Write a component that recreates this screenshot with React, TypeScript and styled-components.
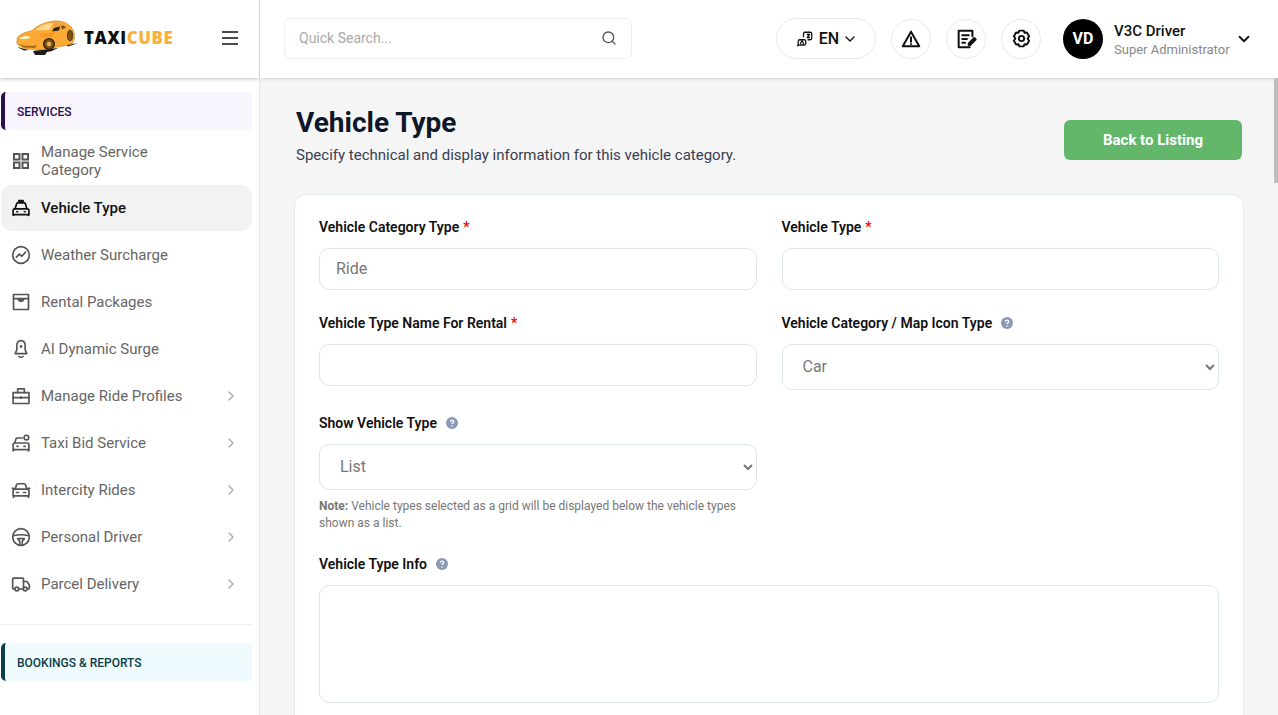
import React from 'react';
import styled, { createGlobalStyle } from 'styled-components';
import { ChevronDown, ChevronRight, Search } from 'lucide-react';

const GlobalStyle = createGlobalStyle`
  html, body {
    margin: 0;
    height: 100%;
    overflow: hidden;
    font-family: Roboto, "Liberation Sans", sans-serif;
  }
  * { box-sizing: border-box; }
`;

const Shell = styled.div`
  display: flex;
  width: 100vw;
  height: 100vh;
  background: #f5f5f5;
`;

const Sidebar = styled.aside`
  flex: 0 0 260px;
  display: flex;
  flex-direction: column;
  background: #fff;
  border-right: 1px solid #e4e4e4;
  overflow: hidden;
`;

const Brand = styled.div`
  flex: 0 0 78px;
  display: flex;
  align-items: center;
  justify-content: space-between;
  padding: 0 21px 2px 16px;
  box-shadow: 0 1px 4px rgba(0, 0, 0, 0.25);
`;

const LogoWrap = styled.div`
  display: flex;
  align-items: center;
  gap: 6px;
`;

const LogoText = styled.span`
  font-family: "Open Sans", sans-serif;
  font-weight: 800;
  font-size: 16.8px;
  letter-spacing: 0.65px;
  color: #111;
  line-height: 1;
`;

const LogoAccent = styled.span`
  color: #fbb03b;
`;

const MenuButton = styled.button`
  display: flex;
  padding: 0;
  border: 0;
  background: none;
  color: #111;
`;

const Nav = styled.nav`
  display: flex;
  flex-direction: column;
  padding: 14px 7px 0 1px;
`;

const SectionHead = styled.div<{ $bg: string; $accent: string; $color: string }>`
  height: 38px;
  display: flex;
  align-items: center;
  padding: 1px 0 0 12px;
  font-size: 12px;
  font-weight: 500;
  color: ${p => p.$color};
  background: ${p => p.$bg};
  border-left: 4px solid ${p => p.$accent};
  border-radius: 5px 0 0 5px;
`;

const NavList = styled.ul`
  list-style: none;
  margin: 8px 0 0;
  padding: 0;
  display: flex;
  flex-direction: column;
  gap: 1px;
`;

const NavItem = styled.li<{ $active?: boolean }>`
  height: 46px;
  display: flex;
  align-items: center;
  padding: 0 13px 0 10px;
  gap: 10px;
  border-radius: 10px;
  font-size: 15px;
  line-height: 18px;
  font-weight: ${p => (p.$active ? 500 : 400)};
  color: ${p => (p.$active ? '#111' : '#666')};
  background: ${p => (p.$active ? '#f2f2f2' : 'transparent')};
`;

const NavIcon = styled.span<{ $active?: boolean }>`
  flex: 0 0 20px;
  min-width: 0;
  display: flex;
  justify-content: center;
  color: ${p => (p.$active ? '#111' : '#555')};
`;

const NavLabel = styled.span`
  flex: 1;
  max-width: 150px;
`;

const NavChevron = styled(ChevronRight)`
  margin-left: auto;
  color: #aaa;
`;

const NavDivider = styled.hr`
  border: 0;
  border-top: 1px solid #eee;
  margin: 17px 0 18px -1px;
  width: 252px;
`;

const Column = styled.div`
  flex: 1;
  min-width: 0;
  display: flex;
  flex-direction: column;
  position: relative;
`;

const TopBar = styled.header`
  flex: 0 0 78px;
  display: flex;
  align-items: center;
  padding: 0 25px 1px 24px;
  background: #fff;
  box-shadow: 0 1px 3px rgba(0, 0, 0, 0.15);
  position: relative;
`;

const SearchBox = styled.div`
  width: 348px;
  height: 41px;
  display: flex;
  align-items: center;
  justify-content: space-between;
  padding: 0 14px 2px;
  border: 1px solid #eee;
  border-radius: 6px;
  color: #555;
`;

const SearchInput = styled.input`
  flex: 1;
  border: 0;
  outline: 0;
  padding: 0;
  font: 400 14px Roboto, sans-serif;
  &::placeholder { color: #aaa; opacity: 1; }
`;

const TopActions = styled.div`
  margin-left: auto;
  display: flex;
  align-items: center;
  gap: 15px;
`;

const LangButton = styled.div`
  width: 100px;
  height: 41px;
  display: flex;
  align-items: center;
  justify-content: center;
  gap: 5px;
  padding-left: 2px;
  border: 1px solid #e8e8e8;
  border-radius: 21px;
  font-size: 16px;
  font-weight: 500;
  color: #111;
`;

const LangChevron = styled(ChevronDown)`
  margin-left: -2px;
`;

const RoundButton = styled.div`
  width: 40px;
  height: 40px;
  display: flex;
  align-items: center;
  justify-content: center;
  border: 1px solid #eaeaea;
  border-radius: 50%;
  color: #111;
`;

const Profile = styled.div`
  display: flex;
  align-items: center;
  margin-left: 7px;
`;

const Avatar = styled.div`
  width: 40px;
  height: 40px;
  display: flex;
  align-items: center;
  justify-content: center;
  border-radius: 50%;
  background: #000;
  color: #fff;
  font-size: 16px;
  font-weight: 700;
`;

const ProfileText = styled.div`
  width: 121px;
  display: flex;
  flex-direction: column;
  gap: 2px;
  margin: 2px 0 0 11px;
`;

const ProfileName = styled.span`
  font-size: 15px;
  font-weight: 500;
  line-height: 18px;
  color: #111;
`;

const ProfileRole = styled.span`
  font-size: 13px;
  line-height: 16px;
  color: #888;
`;

const Main = styled.main`
  flex: 1;
  overflow: hidden;
  padding: 27px 34px 0 34px;
`;

const ScrollThumb = styled.div`
  position: absolute;
  top: 78px;
  right: 0;
  width: 4px;
  height: 105px;
  background: #bdbdbd;
`;

const PageHead = styled.div`
  display: flex;
  align-items: flex-start;
  justify-content: space-between;
  padding: 0 2px;
  margin-bottom: 29px;
`;

const PageTitle = styled.h1`
  margin: 0;
  font-size: 28px;
  font-weight: 700;
  line-height: 36px;
  color: #0f172a;
`;

const PageSub = styled.p`
  margin: 4px 0 0;
  font-size: 15px;
  line-height: 20px;
  color: #374151;
`;

const BackButton = styled.button`
  width: 178px;
  height: 40px;
  margin-top: 15px;
  border: 0;
  border-radius: 6px;
  background: #62b76b;
  color: #fff;
  font: 700 15px Roboto, sans-serif;
`;

const Card = styled.section`
  min-height: 3600px;
  padding: 22px 24px;
  background: #fff;
  border: 1px solid #e5e9f0;
  border-radius: 12px 12px 0 0;
`;

const FormGrid = styled.div`
  display: grid;
  grid-template-columns: 1fr 1fr;
  column-gap: 25px;
  row-gap: 23px;
  align-items: start;
`;

const Field = styled.div<{ $wide?: boolean }>`
  display: flex;
  flex-direction: column;
  grid-column: ${p => (p.$wide ? '1 / -1' : 'auto')};
`;

const Label = styled.label`
  display: flex;
  align-items: center;
  height: 20px;
  margin-bottom: 11px;
  font-size: 14px;
  font-weight: 600;
  color: #111;
`;

const Required = styled.span`
  color: #f00;
  margin-left: 4px;
`;

const HelpIcon = styled.span`
  display: inline-flex;
  margin-left: 9px;
  color: #8a99b5;
`;

const TextInput = styled.input`
  height: 42px;
  padding: 0 16px 2px;
  border: 1px solid #dfe5ee;
  border-radius: 10px;
  outline: 0;
  font: 400 16px Roboto, sans-serif;
  color: #777;
`;

const SelectInput = styled.select`
  height: 46px;
  padding: 0 16px 2px;
  border: 1px solid #dfe5ee;
  border-radius: 10px;
  outline: 0;
  background: #fff;
  font: 400 16px Roboto, sans-serif;
  color: #777;
`;

const AreaInput = styled.textarea`
  height: 118px;
  padding: 12px 16px;
  border: 1px solid #dfe5ee;
  border-radius: 10px;
  outline: 0;
  resize: none;
`;

const Note = styled.p`
  margin: 8px 0 0;
  font-size: 12px;
  line-height: 16.5px;
  color: #777;
`;

const NoteLead = styled.b`
  font-weight: 700;
`;

type IconProps = { size?: number };

const Stroke: React.FC<IconProps & { children: React.ReactNode; width?: number; fill?: string }> = ({ size = 20, width = 2, fill = 'none', children }) => (
  <svg width={size} height={size} viewBox="0 0 24 24" fill={fill} stroke="currentColor" strokeWidth={width} strokeLinecap="round" strokeLinejoin="round">
    {children}
  </svg>
);

const CarLogo = () => (
  <svg width="62" height="36" viewBox="0 0 62 36">
    <path d="M17 31 L24 30 L42 28 L36 31 L31 32 L29 35 L19 35 Z" fill="#1c1c1c" />
    <path d="M1 27 L13 30 L8 30.500 Z M50 24.500 L61 23.500 L52 26.500 Z" fill="#1c1c1c" />
    <path d="M1 19 C2 15 7 13 16 10.500 C22 5 30 1.500 39 1 C46 .8 52 3 55 7 C58 10 59 15 58 20 L56 24 L50 25.500 L38 27.500 L24 30 L12 29 C6 28 2 26 1 23 Z" fill="#fbab35" stroke="#c47a16" strokeWidth=".6" />
    <path d="M19 10 C24 5.500 30 3.200 37 3 L34 9.500 C29 10.500 24 10.500 19 10 Z" fill="#ffd78f" />
    <path d="M39 3 C43 3 47 4 49 7 L36 9.500 Z" fill="#e7a245" />
    <path d="M38 8 L44 6.500 L43 10.500 L36 11.500 Z" fill="#2d210f" />
    <path d="M45 6 C47 5.500 49 6 50 7.500 L46 9.500 Z" fill="#7a5217" />
    <path d="M3 18.500 C7 19.500 11 19.200 15 17.500 L11.500 16 C8 16.200 4.500 17 3 18.500 Z" fill="#fff6d0" />
    <path d="M3 24 C9 26 15 26.500 21 25 L19 28 L8 27.500 Z" fill="#a96a14" />
    <path d="M22 13 C27 14 33 13 40 11 L36 17 L26 18 Z" fill="#f59a22" />
    <circle cx="33" cy="24" r="5.400" fill="#7d5210" stroke="#2d210f" strokeWidth="1.300" />
    <circle cx="33" cy="24" r="2.200" fill="#f2b04f" />
    <ellipse cx="54" cy="15.500" rx="2.500" ry="5.200" fill="#7d5210" stroke="#2d210f" strokeWidth=".8" />
  </svg>
);

const GridIcon = () => (
  <svg width="18" height="18" viewBox="0 0 18 18" fill="none" stroke="currentColor" strokeWidth="2">
    <rect x="2" y="2" width="5.500" height="5.500" />
    <rect x="10.500" y="2" width="5.500" height="5.500" />
    <rect x="2" y="10.500" width="5.500" height="5.500" />
    <rect x="10.500" y="10.500" width="5.500" height="5.500" />
  </svg>
);

const TaxiIcon = () => (
  <Stroke size={22}>
    <path d="M9.500 3h5v2.500h-5z" fill="currentColor" />
    <path d="M5 13 6.500 7.500C6.800 6.300 7.500 5.500 8.800 5.500h6.400c1.300 0 2 .8 2.300 2L19 13" />
    <path d="M2.500 15c0-1.100.9-2 2-2h15c1.100 0 2 .9 2 2v5h-19z" />
    <path d="M3 20v1M21 20v1M7 16.500h1M16 16.500h1" />
  </Stroke>
);

const TrendIcon = () => (
  <Stroke>
    <circle cx="12" cy="12" r="10" />
    <path d="M6.500 14.500l3.500-3.500 3 2.500 4.500-5" />
  </Stroke>
);

const PackageIcon = () => (
  <Stroke>
    <path d="M3 3h18v18H3z" />
    <path d="M3 8h18M8.500 8c.5 2 1.800 3.200 3.500 3.200s3-1.200 3.500-3.200" fill="currentColor" />
  </Stroke>
);

const BellIcon = () => (
  <Stroke>
    <path d="M12 2c3.300 0 5 3 5 6.500V13l2 4.500H5L7 13V8.500C7 5 8.700 2 12 2z" />
    <path d="M9.500 21c.7.700 1.500 1 2.500 1s1.800-.3 2.500-1" />
    <circle cx="12" cy="9" r=".7" fill="currentColor" />
  </Stroke>
);

const BriefcaseIcon = () => (
  <Stroke>
    <path d="M2.500 8h19v13h-19z" />
    <path d="M8 8V3.500h8V8M2.500 14h19M12 13v2" />
  </Stroke>
);

const BidCarIcon = () => (
  <Stroke size={22}>
    <path d="M4.500 12l1.500-5c.3-.8.9-1 1.500-1h6" />
    <path d="M2.500 14c0-1.100.9-2 2-2h15c1.100 0 2 .9 2 2v6h-19z" />
    <path d="M3 20v1.500M21 20v1.500M7 16h1.500M15.500 16H17" />
    <circle cx="18.500" cy="5.500" r="2.800" />
  </Stroke>
);

const CarIcon = () => (
  <Stroke size={22}>
    <path d="M5 11l1.500-5c.3-1 1-1.500 2-1.500h7c1 0 1.700.5 2 1.500L19 11" />
    <path d="M2.500 13c0-1.100.9-2 2-2h15c1.100 0 2 .9 2 2v6h-19z" />
    <path d="M1.500 10h2M20.500 10h2M3 19v2M21 19v2M6.500 15h2.500M15 15h2.500" />
  </Stroke>
);

const WheelIcon = () => (
  <Stroke>
    <circle cx="12" cy="12" r="10" />
    <path d="M2.500 10.500c6-1.500 13-1.500 19 0M8 14h8M8 14l2.500 3v4.500M16 14l-2.500 3v4.500" />
  </Stroke>
);

const TruckIcon = () => (
  <Stroke size={22}>
    <path d="M4.500 18H3c-.6 0-1-.4-1-1V6c0-.6.4-1 1-1h11c.6 0 1 .4 1 1v12H9" />
    <path d="M15 9h4l3 4v4c0 .6-.4 1-1 1h-1.500" />
    <circle cx="7" cy="18" r="2.300" />
    <circle cx="17" cy="18" r="2.300" />
  </Stroke>
);

const TranslateIcon = () => (
  <Stroke size={18} width={1.700}>
    <path d="M11 13H5c-1.100 0-2 .9-2 2v4l-1 2 3-1h6c1.100 0 2-.9 2-2v-3c0-1.100-.9-2-2-2z" />
    <path d="M10 9V5c0-1.100.9-2 2-2h7c1.100 0 2 .9 2 2v6c0 1.100-.9 2-2 2h-3" />
    <path d="M6 18l2-4 2 4M15 6h3l-3 4h3" />
  </Stroke>
);

const AlertIcon = () => (
  <Stroke size={22} width={2.200}>
    <path d="M12 4 3 20h18z" />
    <path d="M12 10v5M12 17.500v.01" />
  </Stroke>
);

const NoteEditIcon = () => (
  <Stroke size={22} width={2.200}>
    <path d="M19 9V3H4v18h12" />
    <path d="M8 8h7M8 12h5M8 16h3" />
    <path d="M15 17l6-6 1.500 1.500-6 6H15z" />
  </Stroke>
);

const GearIcon = () => (
  <Stroke size={21} width={2.200}>
    <path d="M9.500 3h5l1 2.500 2.700-.4 2.500 4.300-1.700 2.600 1.700 2.600-2.500 4.300-2.700-.4-1 2.500h-5l-1-2.500-2.700.4-2.500-4.300L5 12 3.300 9.400l2.500-4.300 2.700.4z" />
    <circle cx="12" cy="12" r="3" />
  </Stroke>
);

const HelpGlyph = () => (
  <svg width="12" height="12" viewBox="0 0 12 12">
    <circle cx="6" cy="6" r="6" fill="currentColor" />
    <path d="M4.300 4.600C4.400 3.700 5.100 3.200 6 3.200c1 0 1.700.6 1.700 1.400 0 1.300-1.700 1.200-1.700 2.400" fill="none" stroke="#fff" strokeWidth="1.300" />
    <circle cx="6" cy="9" r=".8" fill="#fff" />
  </svg>
);

const Hamburger = () => (
  <svg width="16" height="14" viewBox="0 0 16 14" stroke="currentColor" strokeWidth="1.700">
    <path d="M0 1h16M0 7h16M0 13h16" />
  </svg>
);

const navItems = [
  { label: 'Manage Service Category', icon: <GridIcon /> },
  { label: 'Vehicle Type', icon: <TaxiIcon />, active: true },
  { label: 'Weather Surcharge', icon: <TrendIcon /> },
  { label: 'Rental Packages', icon: <PackageIcon /> },
  { label: 'AI Dynamic Surge', icon: <BellIcon /> },
  { label: 'Manage Ride Profiles', icon: <BriefcaseIcon />, more: true },
  { label: 'Taxi Bid Service', icon: <BidCarIcon />, more: true },
  { label: 'Intercity Rides', icon: <CarIcon />, more: true },
  { label: 'Personal Driver', icon: <WheelIcon />, more: true },
  { label: 'Parcel Delivery', icon: <TruckIcon />, more: true },
];

export default function App() {
  return (
    <Shell>
      <GlobalStyle />
      <Sidebar>
        <Brand>
          <LogoWrap>
            <CarLogo />
            <LogoText>TAXI<LogoAccent>CUBE</LogoAccent></LogoText>
          </LogoWrap>
          <MenuButton><Hamburger /></MenuButton>
        </Brand>
        <Nav>
          <SectionHead $bg="#f8f5ff" $accent="#2b0f4f" $color="#2b0f4f">SERVICES</SectionHead>
          <NavList>
            {navItems.map(item => (
              <NavItem key={item.label} $active={item.active}>
                <NavIcon $active={item.active}>{item.icon}</NavIcon>
                <NavLabel>{item.label}</NavLabel>
                {item.more && <NavChevron size={16} />}
              </NavItem>
            ))}
          </NavList>
          <NavDivider />
          <SectionHead $bg="#f0fbff" $accent="#0b3d4a" $color="#0b3d4a">BOOKINGS &amp; REPORTS</SectionHead>
        </Nav>
      </Sidebar>
      <Column>
        <TopBar>
          <SearchBox>
            <SearchInput placeholder="Quick Search..." />
            <Search size={16} />
          </SearchBox>
          <TopActions>
            <LangButton>
              <TranslateIcon />
              EN
              <LangChevron size={16} />
            </LangButton>
            <RoundButton><AlertIcon /></RoundButton>
            <RoundButton><NoteEditIcon /></RoundButton>
            <RoundButton><GearIcon /></RoundButton>
            <Profile>
              <Avatar>VD</Avatar>
              <ProfileText>
                <ProfileName>V3C Driver</ProfileName>
                <ProfileRole>Super Administrator</ProfileRole>
              </ProfileText>
              <ChevronDown size={18} color="#111" strokeWidth={2.400} />
            </Profile>
          </TopActions>
        </TopBar>
        <Main>
          <PageHead>
            <div>
              <PageTitle>Vehicle Type</PageTitle>
              <PageSub>Specify technical and display information for this vehicle category.</PageSub>
            </div>
            <BackButton>Back to Listing</BackButton>
          </PageHead>
          <Card>
            <FormGrid>
              <Field>
                <Label>Vehicle Category Type<Required>*</Required></Label>
                <TextInput defaultValue="Ride" />
              </Field>
              <Field>
                <Label>Vehicle Type<Required>*</Required></Label>
                <TextInput />
              </Field>
              <Field>
                <Label>Vehicle Type Name For Rental<Required>*</Required></Label>
                <TextInput />
              </Field>
              <Field>
                <Label>Vehicle Category / Map Icon Type<HelpIcon><HelpGlyph /></HelpIcon></Label>
                <SelectInput defaultValue="Car"><option>Car</option><option>Bike</option></SelectInput>
              </Field>
              <Field>
                <Label>Show Vehicle Type<HelpIcon><HelpGlyph /></HelpIcon></Label>
                <SelectInput defaultValue="List"><option>List</option><option>Grid</option></SelectInput>
                <Note><NoteLead>Note:</NoteLead> Vehicle types selected as a grid will be displayed below the vehicle types shown as a list.</Note>
              </Field>
              <Field />
              <Field $wide>
                <Label>Vehicle Type Info<HelpIcon><HelpGlyph /></HelpIcon></Label>
                <AreaInput />
              </Field>
            </FormGrid>
          </Card>
        </Main>
        <ScrollThumb />
      </Column>
    </Shell>
  );
}
